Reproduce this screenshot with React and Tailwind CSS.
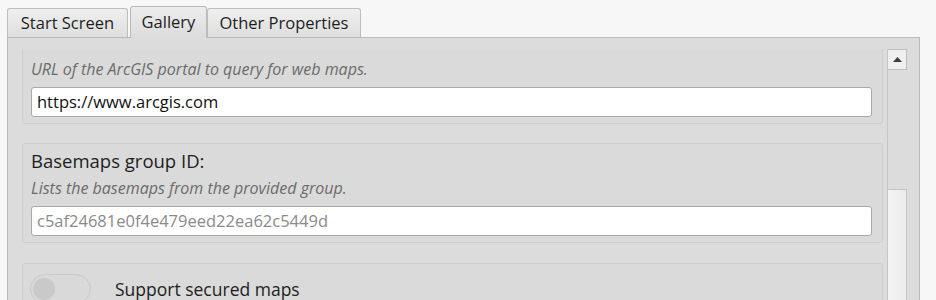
import React from "react";

const font = { fontFamily: '"Open Sans", "Liberation Sans", sans-serif' };

function Tab({ label, active, width }) {
  if (active) {
    return (
      <div className={`relative z-10 -mb-px flex h-[32px] items-center justify-center rounded-t-[3px] border border-b-0 border-[#b9b9b9] bg-gradient-to-b from-[#ececec] to-[#dcdcdc] text-[16.5px] text-[#1e1e1e] ${width}`}>
        {label}
      </div>
    );
  }
  return (
    <div className={`flex h-[29px] items-center justify-center rounded-t-[3px] border border-b-0 border-[#bdbdbd] bg-gradient-to-b from-[#efefef] to-[#dedede] text-[16.5px] text-[#1e1e1e] ${width}`}>
      {label}
    </div>
  );
}

function FieldBox({ label, hint, value, placeholder }) {
  return (
    <div className="rounded-[3px] border border-[#cecece] bg-[#dadada] pb-[6px] pl-[8px] pr-[10px] pt-[7px]">
      <div className="h-[20px] text-[18.5px] leading-[20px] text-[#1e1e1e]">{label}</div>
      <div className="mt-[8px] h-[18px] text-[16px] italic leading-[18px] text-[#6b6b6b]">{hint}</div>
      <div className="mt-[9px] flex h-[30px] items-center rounded-[3px] border border-[#a9a9a9] bg-white pl-[5px] text-[16.5px]">
        {value ? (
          <span className="text-[#111]">{value}</span>
        ) : (
          <span className="text-[#8a8a8a]">{placeholder}</span>
        )}
      </div>
    </div>
  );
}

export default function App() {
  return (
    <div className="h-[300px] w-[936px] overflow-hidden bg-[#f7f7f7] pl-[7px] pr-[16px] pt-[6px]" style={font}>
      <div className="flex items-end">
        <Tab label="Start Screen" width="w-[121px]" />
        <div className="w-[2px]" />
        <Tab label="Gallery" width="w-[77px]" active />
        <Tab label="Other Properties" width="w-[154px]" />
      </div>
      <div className="flex h-[280px] border border-[#b9b9b9] bg-[#dcdcdc] pt-[11px]">
        <div className="flex-1 overflow-hidden pl-[14px] pr-[4px]">
          <div className="mt-[-25px] flex flex-col gap-[19px]">
            <FieldBox
              label="Portal URL:"
              hint="URL of the ArcGIS portal to query for web maps."
              value="https://www.arcgis.com"
            />
            <FieldBox
              label="Basemaps group ID:"
              hint="Lists the basemaps from the provided group."
              placeholder="c5af24681e0f4e479eed22ea62c5449d"
            />
            <div className="mt-px h-[80px] rounded-[3px] border border-[#cecece] bg-[#dadada] pl-[7px] pt-[10px]">
              <div className="flex items-center gap-[24px]">
                <div className="flex h-[30px] w-[61px] items-center rounded-full border border-[#c9c9c9] bg-[#d9d9d9] pl-[2px]">
                  <div className="h-[22px] w-[22px] rounded-full bg-[#c9c9c9]" />
                </div>
                <span className="text-[17.5px] text-[#1e1e1e]">Support secured maps</span>
              </div>
            </div>
          </div>
        </div>
        <div className="flex w-[20px] flex-col border-l border-[#c6c6c6] bg-[#dcdcdc]">
          <div className="flex h-[21px] items-center justify-center border border-l-0 border-[#bdbdbd] bg-[#efefef]">
            <svg width="9" height="5" viewBox="0 0 9 5">
              <path d="M0 5 L4.5 0 L9 5 Z" fill="#3c3c3c" />
            </svg>
          </div>
          <div className="h-[119px]" />
          <div className="flex-1 border border-l-0 border-[#c2c2c2] bg-gradient-to-r from-[#f4f4f4] to-[#ebebeb]" />
        </div>
        <div className="w-[12px]" />
      </div>
    </div>
  );
}
